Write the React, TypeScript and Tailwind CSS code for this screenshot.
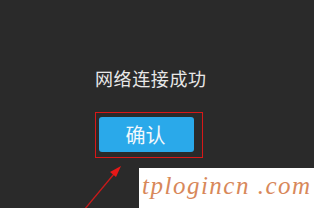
export default function App() {
  return (
    <div className="relative w-[314px] h-[208px] overflow-hidden bg-[#2a2a2a] font-['Noto_Sans_CJK_SC',sans-serif]">
      {/* dialog content */}
      <div className="flex flex-col items-start pl-[95px] pt-[66px]">
        <div className="text-[18px] leading-[24px] tracking-[0.6px] text-[#e8e8e8]">
          网络连接成功
        </div>
        <div className="mt-[22px] w-[108px] h-[46px] border border-[#d81818] pl-[3px] pt-[4px]">
          <button className="w-[95px] h-[35px] rounded-[3px] bg-[#2aa9ea] text-[20px] leading-[35px] text-[#f2f8fc] pr-[2px]">
            确认
          </button>
        </div>
      </div>

      {/* arrow annotation */}
      <svg
        className="absolute left-0 top-0"
        width="314"
        height="208"
        viewBox="0 0 314 208"
      >
        <line x1="84" y1="210" x2="114" y2="174" stroke="#c81a1a" strokeWidth="1.3" />
        <polygon points="121,166 110,172 116,177" fill="#e81818" />
      </svg>

      {/* watermark */}
      <div className="absolute left-[139px] top-[168px] w-[175px] h-[40px] bg-white pl-[3px] pt-[3px]">
        <span className="font-['Liberation_Serif',serif] italic text-[25px] leading-[30px] tracking-[1.5px] text-[#d8885a]">
          tplogincn .com
        </span>
      </div>
    </div>
  )
}
